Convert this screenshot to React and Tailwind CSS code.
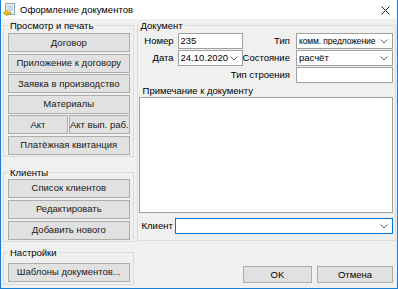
const Chevron = () => (
  <svg width="8" height="5" viewBox="0 0 8 5" className="shrink-0">
    <polyline points="0.5,0.5 4,4 7.5,0.5" fill="none" stroke="#6a6a6a" strokeWidth="1" />
  </svg>
);

const Btn = ({ children, className = "" }) => (
  <button className={"h-[19px] w-full bg-[#e1e1e1] border border-[#adadad] text-[9.5px] leading-none text-[#1a1a1a] whitespace-nowrap flex items-center justify-center " + className}>
    {children}
  </button>
);

const Group = ({ title, className = "", children }) => (
  <fieldset className={"border border-[#dcdcdc] " + className}>
    <legend className="px-[2px] leading-[13px] text-[9.5px] text-black">{title}</legend>
    {children}
  </fieldset>
);

const Combo = ({ value, className = "", textClass = "", focused }) => (
  <div className={"h-[16px] bg-white border flex items-center pl-[2px] pr-[4px] whitespace-nowrap " + (focused ? "border-[#0078d7] " : "border-[#a0a0a0] ") + className}>
    <span className={"flex-1 min-w-0 overflow-hidden leading-none " + textClass}>{value}</span>
    <Chevron />
  </div>
);

export default function App() {
  return (
    <div className="w-[398px] h-[289px] flex flex-col bg-[#f0f0f0] border-x border-b border-[#1a7fd4] text-[9.5px] text-black overflow-hidden" style={{ fontFamily: '"Liberation Sans", Arial, sans-serif' }}>
      {/* title bar */}
      <div className="h-[19px] bg-white flex items-center shrink-0">
        <svg width="12" height="14" viewBox="0 0 12 14" className="ml-[2px]">
          <rect x="2.5" y="0.5" width="9" height="11" fill="#f4f8fc" stroke="#8aa4c0" />
          <line x1="4" y1="3" x2="10" y2="3" stroke="#9fb4cc" />
          <line x1="4" y1="5" x2="10" y2="5" stroke="#9fb4cc" />
          <line x1="4" y1="7" x2="10" y2="7" stroke="#9fb4cc" />
          <path d="M0 10 L4 7 L4 9 L8 9 L8 11 L4 11 L4 13 Z" fill="#e8c21c" stroke="#b08a10" strokeWidth="0.5" />
        </svg>
        <span className="ml-[5px] text-[9.5px] leading-none text-black">Оформление документов</span>
        <svg width="9" height="9" viewBox="0 0 9 9" className="ml-auto mr-[7px] mt-[2px]">
          <path d="M0.5 0.5 L8.5 8.5 M8.5 0.5 L0.5 8.5" stroke="#1a1a1a" strokeWidth="1" />
        </svg>
      </div>

      {/* body */}
      <div className="flex-1 flex items-start pl-[2px] pr-[3px] gap-[3px]">
        {/* left column */}
        <div className="w-[131px] flex flex-col">
          <Group title="Просмотр и печать" className="pl-[4px] pr-[3px] pb-[1px]">
            <div className="flex flex-col gap-[1.5px] mt-[1px]">
              <Btn>Договор</Btn>
              <Btn>Приложение к договору</Btn>
              <Btn>Заявка в производство</Btn>
              <Btn>Материалы</Btn>
              <div className="flex gap-[1px]">
                <Btn className="!w-[60px] shrink-0">Акт</Btn>
                <Btn className="flex-1">Акт вып. раб.</Btn>
              </div>
              <Btn>Платёжная квитанция</Btn>
            </div>
          </Group>
          <Group title="Клиенты" className="mt-[9px] pl-[4px] pr-[3px] pb-[1px]">
            <div className="flex flex-col gap-[2px]">
              <Btn>Список клиентов</Btn>
              <Btn>Редактировать</Btn>
              <Btn>Добавить нового</Btn>
            </div>
          </Group>
          <Group title="Настройки" className="mt-[4px] pl-[4px] pr-[3px] pb-[2px]">
            <Btn className="mt-[4px]">Шаблоны документов...</Btn>
          </Group>
        </div>

        {/* right column */}
        <div className="flex-1 flex flex-col">
          <Group title="Документ" className="pl-[1px] pr-[2px] pb-[6px]">
            <div className="flex flex-col gap-[1px] mt-[1px]">
              <div className="flex items-center h-[16px]">
                <span className="w-[35px] text-right">Номер</span>
                <div className="ml-[4px] w-[65px] h-[16px] bg-white border border-[#a0a0a0] flex items-center pl-[2px]">235</div>
                <span className="flex-1 text-right">Тип</span>
                <Combo value="комм. предложение" textClass="text-[8.5px] tracking-[-0.1px]" className="ml-[6px] w-[97px]" />
              </div>
              <div className="flex items-center h-[16px]">
                <span className="w-[35px] text-right">Дата</span>
                <Combo value="24.10.2020" className="ml-[4px] w-[65px]" />
                <span className="flex-1 text-right">Состояние</span>
                <Combo value="расчёт" className="ml-[6px] w-[97px]" />
              </div>
              <div className="flex items-center h-[16px]">
                <span className="flex-1 text-right">Тип строения</span>
                <div className="ml-[6px] w-[97px] h-[16px] bg-white border border-[#a0a0a0]" />
              </div>
            </div>
            <div className="mt-[1px] pl-[4px] leading-[13px]">Примечание к документу</div>
            <div className="h-[116px] bg-white border border-[#a0a0a0]" />
            <div className="flex items-center mt-[5px]">
              <span className="pl-[3px] w-[36px] shrink-0">Клиент</span>
              <Combo value="" focused className="flex-1" />
            </div>
          </Group>
          <div className="flex justify-end gap-[5px] mt-[25px] pr-[3px]">
            <button className="w-[69px] h-[17px] bg-[#e1e1e1] border border-[#adadad] flex items-center justify-center leading-none">OK</button>
            <button className="w-[76px] h-[17px] bg-[#e1e1e1] border border-[#adadad] flex items-center justify-center leading-none">Отмена</button>
          </div>
        </div>
      </div>
    </div>
  );
}
